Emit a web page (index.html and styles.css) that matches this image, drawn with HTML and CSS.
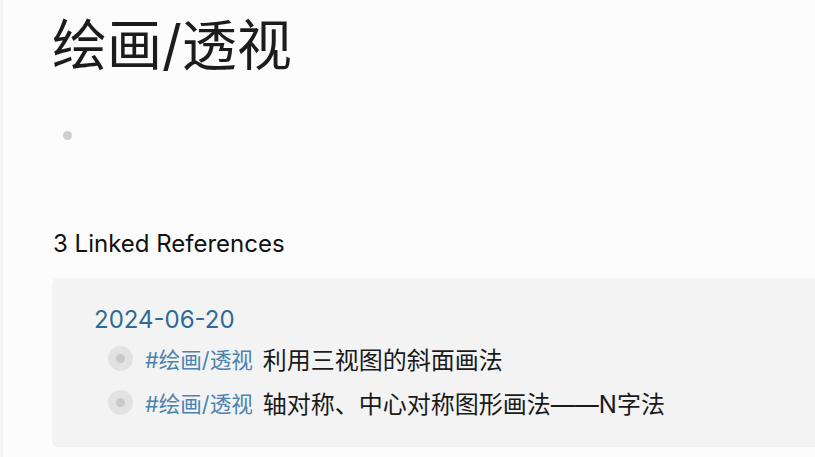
FILE: index.html
```html
<!DOCTYPE html>
<html>
<head>
<meta charset="utf-8">
<link rel="stylesheet" href="styles.css">
</head>
<body>
<div class="page">
  <h1 class="title">绘画/透视</h1>
  <div class="empty-block"><span class="dot"></span></div>
  <h2 class="refs-title">3 Linked References</h2>
  <div class="ref-panel">
    <div class="ref-date">2024-06-20</div>
    <div class="ref-row">
      <span class="bullet"><span class="bullet-inner"></span></span>
      <span class="tag">#绘画/透视</span>
      <span class="ref-text">利用三视图的斜面画法</span>
    </div>
    <div class="ref-row">
      <span class="bullet"><span class="bullet-inner"></span></span>
      <span class="tag">#绘画/透视</span>
      <span class="ref-text">轴对称、中心对称图形画法——N字法</span>
    </div>
  </div>
</div>
</body>
</html>
```
FILE: styles.css
```css
html, body {
  margin: 0;
  padding: 0;
}
body {
  background: #fcfcfc;
  font-family: Inter, "Noto Sans CJK SC", sans-serif;
  color: #1a1a1a;
  height: 457px;
  overflow: hidden;
}
.page {
  border-left: 3px solid #f3f3f3;
  padding-left: 49px;
  height: 100%;
}
.title {
  margin: 0;
  padding-top: 15px;
  font-size: 55px;
  font-weight: 400;
  line-height: 60px;
  color: #1c1c1c;
}
.empty-block {
  height: 24px;
  margin-top: 48px;
  display: flex;
  align-items: center;
  padding-left: 11px;
}
.dot {
  width: 9px;
  height: 9px;
  border-radius: 50%;
  background: #cfcfcf;
}
.refs-title {
  margin: 81px 0 0 1px;
  font-size: 24px;
  font-weight: 400;
  line-height: 32px;
  color: #111;
}
.ref-panel {
  box-sizing: border-box;
  margin-top: 18px;
  background: #f3f3f3;
  border-radius: 6px 0 0 6px;
  padding: 26px 0 0 42px;
  height: 169px;
}
.ref-date {
  font-size: 24px;
  color: #2f6a98;
  line-height: 32px;
}
.ref-row {
  display: flex;
  align-items: center;
  height: 44px;
  padding-left: 14px;
}
.bullet {
  width: 25px;
  height: 25px;
  border-radius: 50%;
  background: #e2e2e2;
  display: flex;
  align-items: center;
  justify-content: center;
  margin-right: 12px;
}
.bullet-inner {
  width: 9px;
  height: 9px;
  border-radius: 50%;
  background: #c9c9c9;
}
.tag {
  font-size: 21.6px;
  color: #4a83b0;
  margin-right: 10px;
}
.ref-text {
  font-size: 24px;
  color: #1a1a1a;
}
```
